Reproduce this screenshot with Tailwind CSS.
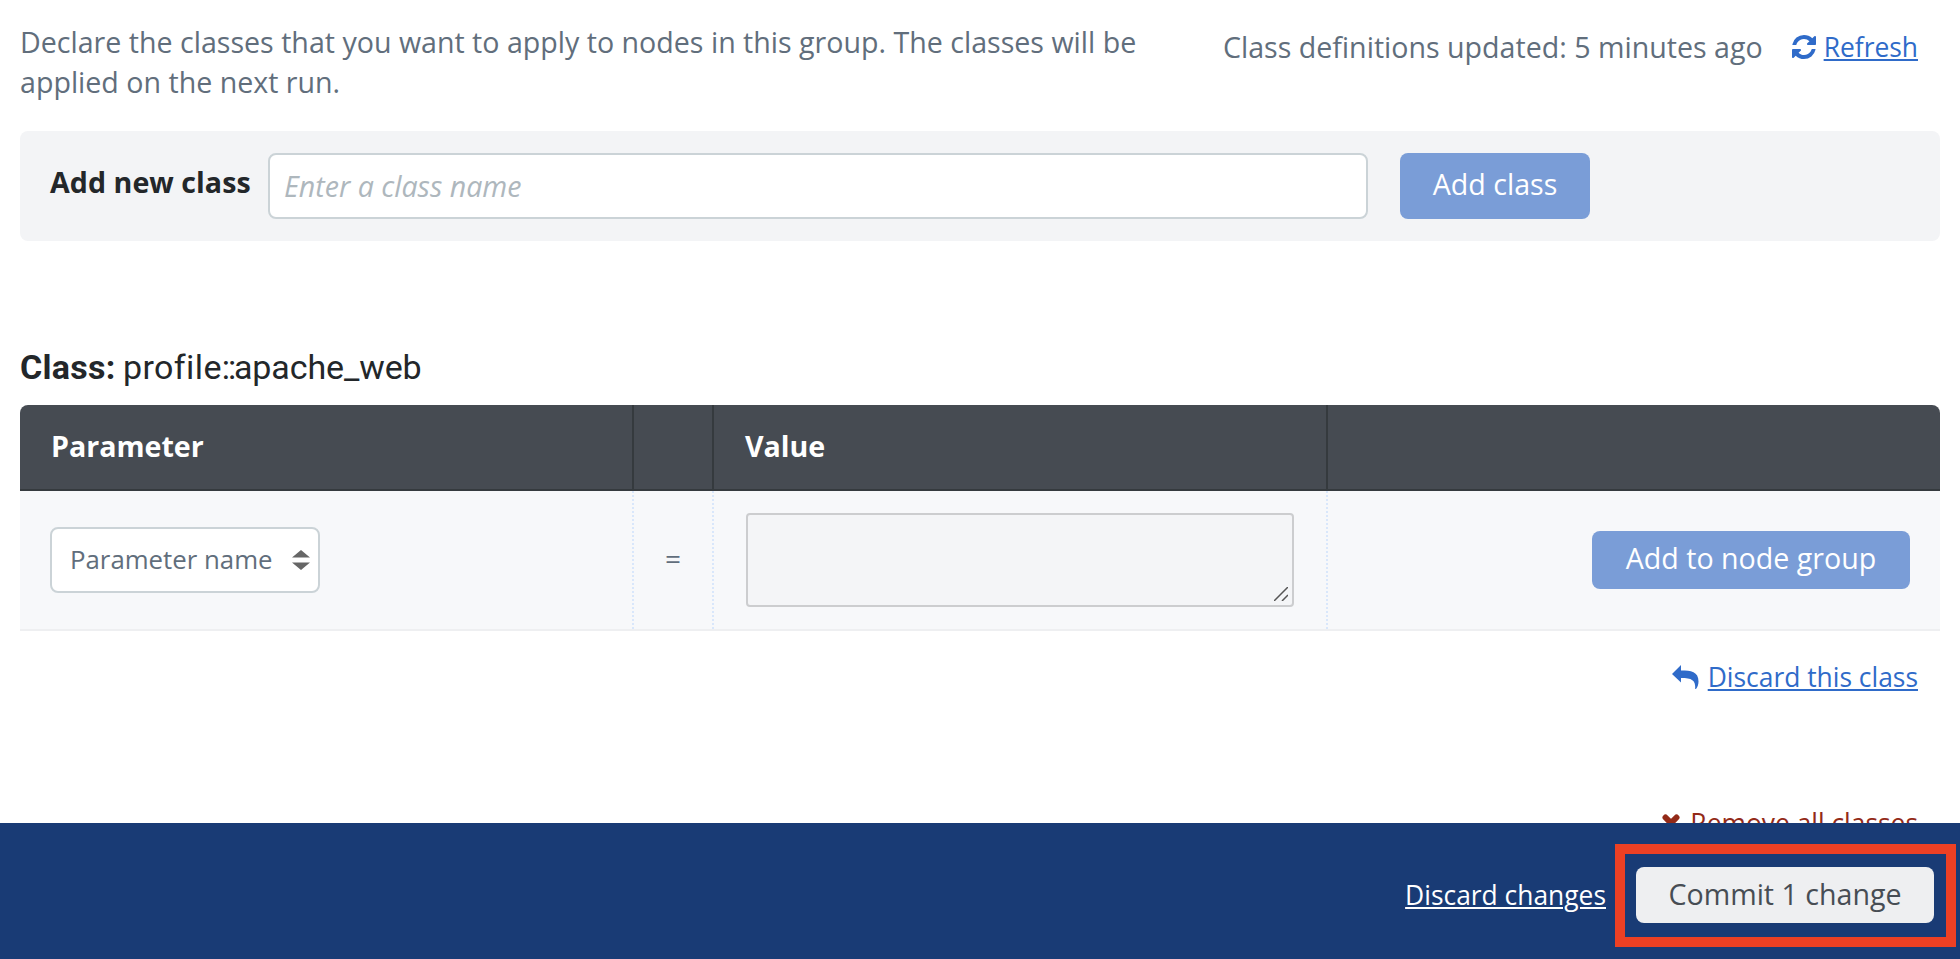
<!DOCTYPE html>
<html lang="en">
<head>
<meta charset="utf-8">
<title>Classes</title>
<script src="https://cdn.jsdelivr.net/npm/@tailwindcss/browser@4"></script>
</head>
<body class="h-[959px] w-[1960px] overflow-hidden bg-white font-['Open_Sans',sans-serif] text-[28.6px] leading-10 text-[#616e7c] flex flex-col">
<main class="h-[823px] shrink-0 overflow-hidden px-5 flex flex-col">
  <div class="flex h-[131px] shrink-0 justify-between pt-[22px] pr-[22px]">
    <p class="w-[1160px]">Declare the classes that you want to apply to nodes in this group. The classes will be applied on the next run.</p>
    <div class="flex h-10 items-center whitespace-nowrap pt-[10px]">
      <span>Class definitions updated: 5 minutes ago</span>
      <svg class="ml-[29px] mr-2 size-6" viewBox="0 0 1536 1536" fill="#2f6bc9"><path d="M1511 928q0 5-1 7-64 268-268 434.500T764 1536q-146 0-282.500-55T238 1324l-129 129q-19 19-45 19t-45-19-19-45V960q0-26 19-45t45-19h448q26 0 45 19t19 45-19 45l-137 137q71 66 161 102t187 36q134 0 250-65t186-179q11-17 53-117 8-23 30-23h192q13 0 22.500 9.500t9.500 22.500zm25-800v448q0 26-19 45t-45 19h-448q-26 0-45-19t-19-45 19-45l138-138Q969 256 768 256q-134 0-250 65T332 500q-11 17-53 117-8 23-30 23H50q-13 0-22.500-9.500T18 608v-7q65-268 270-434.500T768 0q146 0 284 55.500T1297 212l130-129q19-19 45-19t45 19 19 45z"/></svg>
      <a class="text-[26.4px] text-[#2f6bc9] underline decoration-2 underline-offset-2">Refresh</a>
    </div>
  </div>

  <div class="flex h-[110px] shrink-0 items-center rounded-lg bg-[#f3f4f6] pl-[30px]">
    <label class="w-[218px] shrink-0 pb-2 font-bold text-[#23272a] tracking-[0.05px] whitespace-nowrap">Add new class</label>
    <div class="h-[66px] w-[1100px] rounded-lg border-2 border-[#cbd3d7] bg-white px-[14px] pt-[11px] italic text-[#aeb7bd]">Enter a class name</div>
    <button class="ml-8 h-[66px] w-[190px] rounded-lg bg-[#7a9dd7] pb-1 text-white">Add class</button>
  </div>

  <h2 class="mt-[104px] h-[60px] shrink-0 pt-0.5 font-['Roboto',sans-serif] text-[34px] text-[#23272a] whitespace-nowrap"><b class="inline-block w-[103px] tracking-[0.3px]">Class:</b><span class="tracking-[0.4px]">profile</span><span class="tracking-[-2.2px]">::</span><span class="tracking-[-0.1px]">apache_web</span></h2>

  <div class="grid shrink-0 grid-cols-[614px_80px_614px_612px]">
    <div class="col-span-4 grid h-[86px] grid-cols-subgrid rounded-t-lg border-b-2 border-[#353a3e] bg-[#464b52] font-bold text-white *:border-[#353a3e] *:pt-[21px]">
      <div class="border-r-2 pl-[31px]">Parameter</div>
      <div class="border-r-2"></div>
      <div class="border-r-2 pl-[31px]">Value</div>
      <div></div>
    </div>
    <div class="col-span-4 grid h-[140px] grid-cols-subgrid border-b-2 border-[#eeeff1] bg-[#f7f8fa] text-[26px] *:flex *:items-center *:border-dotted *:border-[#d9e7fb]">
      <div class="border-r-2 pl-[30px]">
        <div class="flex h-[66px] w-[270px] items-center justify-between rounded-lg border-2 border-[#cbd3d7] bg-white pl-[18px] pr-2">
          <span class="pb-0.5 text-[25.8px]">Parameter name</span>
          <svg class="h-5 w-[18px]" viewBox="0 0 18 20" fill="#666"><path d="M9 0l9 7.500H0zM9 20l9-7.500H0z"/></svg>
        </div>
      </div>
      <div class="justify-center border-r-2 pb-1 text-[28px]">=</div>
      <div class="border-r-2 pl-8">
        <div class="flex h-[94px] w-[548px] items-end justify-end rounded border-2 border-[#cccdcf] bg-[#f4f5f7] p-1">
          <svg class="size-[14px]" viewBox="0 0 14 14" fill="none" stroke="#555" stroke-width="1.500"><path d="M0 14L14 0M8 14l6-6"/></svg>
        </div>
      </div>
      <div class="justify-end pr-[30px]"><button class="h-[58px] w-[318px] rounded-lg bg-[#7a9dd7] pb-1 text-[28.6px] text-white">Add to node group</button></div>
    </div>
  </div>

  <div class="flex shrink-0 flex-col items-end pt-[26px] pr-[22px] text-[26.4px]">
    <div class="flex h-10 items-center text-[#2f6bc9]">
      <svg class="mr-[9px] h-6 w-[27px]" viewBox="0 0 27 24" fill="currentColor"><path d="M9 0v5.500c10 0 17.500 1 17.500 11 0 3-1 5.500-2.500 7.500h-.8c.6-9-3.500-11-14.200-11v4.500L0 9z"/></svg>
      <a class="underline decoration-2 underline-offset-2">Discard this class</a>
    </div>
    <div class="mt-[106px] flex h-10 items-center text-[#932a18]">
      <svg class="mr-[10px] size-[18px]" viewBox="0 0 18 18" stroke="currentColor" stroke-width="6" stroke-linecap="round"><path d="M3.500 3.500l11 11M14.500 3.500l-11 11"/></svg>
      <a>Remove all classes</a>
    </div>
  </div>
</main>
<footer class="flex h-[136px] shrink-0 items-start justify-end bg-[#193b75] pr-1 pt-[21px] text-white">
  <a class="mt-[31px] mr-[9px] text-[26.4px] underline decoration-2 underline-offset-2">Discard changes</a>
  <div class="h-[103px] w-[341px] border-10 border-[#ec4024] px-[11px] pt-[13px]">
    <button class="h-[56px] w-[298px] rounded-lg bg-[#eeeff1] pb-0.5 text-[#474d54]">Commit 1 change</button>
  </div>
</footer>
</body>
</html>
